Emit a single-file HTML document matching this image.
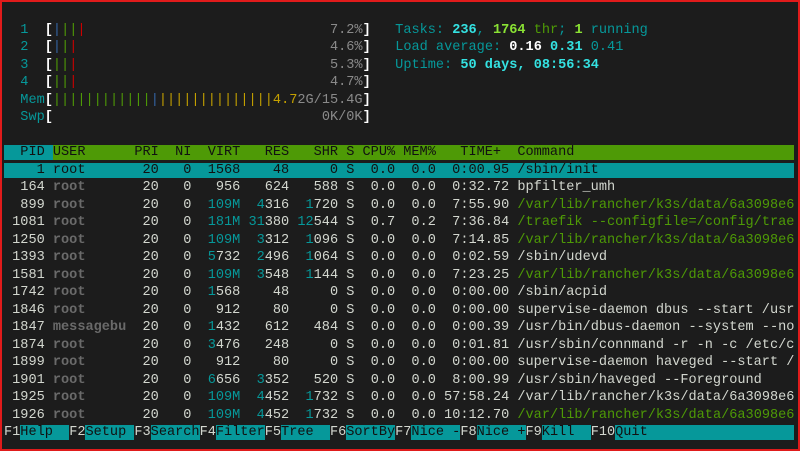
<!DOCTYPE html>
<html><head><meta charset="utf-8"><style>
html,body{margin:0;padding:0;background:#1c1c1c;}
body{width:800px;height:451px;overflow:hidden;position:relative;}
.frame{position:absolute;left:0;top:0;width:796px;height:447px;border:2px solid #e01b1b;}
pre{position:absolute;left:4px;top:4px;margin:0;font-family:"Liberation Mono",monospace;font-size:13.58px;line-height:17.5px;color:#d3d7cf;white-space:pre;}
.c{color:#06989a}.C{color:#34e2e2;font-weight:bold}.g{color:#4e9a06}.G{color:#8ae234;font-weight:bold}
.b{color:#3465a4}.r{color:#cc0000}.y{color:#c4a000}.k{color:#8a8a8a}.W{color:#fff;font-weight:bold}
.u{color:#6a6a6a;font-weight:bold}
.hp{background:#06989a;color:#111}.hg{background:#4e9a06;color:#111}
.sel{background:#06989a;color:#111}
.f{background:#06989a;color:#111}
</style></head><body><div class="frame"></div>
<pre>

  <span class="c">1</span>  <span class="W">[</span><span class="b">|</span><span class="g">||</span><span class="r">|</span>                              <span class="k">7.2%</span><span class="W">]</span>   <span class="c">Tasks: </span><span class="C">236</span><span class="c">, </span><span class="G">1764</span><span class="g"> thr</span><span class="c">; </span><span class="G">1</span><span class="c"> running</span>
  <span class="c">2</span>  <span class="W">[</span><span class="b">|</span><span class="g">|</span><span class="r">|</span>                               <span class="k">4.6%</span><span class="W">]</span>   <span class="c">Load average: </span><span class="W">0.16 </span><span class="C">0.31 </span><span class="c">0.41</span>
  <span class="c">3</span>  <span class="W">[</span><span class="g">||</span><span class="r">|</span>                               <span class="k">5.3%</span><span class="W">]</span>   <span class="c">Uptime: </span><span class="C">50 days, 08:56:34</span>
  <span class="c">4</span>  <span class="W">[</span><span class="g">||</span><span class="r">|</span>                               <span class="k">4.7%</span><span class="W">]</span>
  <span class="c">Mem</span><span class="W">[</span><span class="g">||||||||||||</span><span class="b">|</span><span class="y">||||||||||||||4.7</span><span class="k">2G/15.4G</span><span class="W">]</span>
  <span class="c">Swp</span><span class="W">[</span>                                 <span class="k">0K/0K</span><span class="W">]</span>

<span class="hp">  PID </span><span class="hg">USER      PRI  NI  VIRT   RES   SHR S CPU% MEM%   TIME+  Command                           </span>
<span class="sel">    1 root       20   0  1568    48     0 S  0.0  0.0  0:00.95 /sbin/init                        </span>
  164 <span class="u">root     </span>  20   0   956   624   588 S  0.0  0.0  0:32.72 bpfilter_umh
  899 <span class="u">root     </span>  20   0  <span class="c">109M</span>  <span class="c">4</span>316  <span class="c">1</span>720 S  0.0  0.0  7:55.90 <span class="g">/var/lib/rancher/k3s/data/6a3098e6</span>
 1081 <span class="u">root     </span>  20   0  <span class="c">181M</span> <span class="c">31</span>380 <span class="c">12</span>544 S  0.7  0.2  7:36.84 <span class="g">/traefik --configfile=/config/trae</span>
 1250 <span class="u">root     </span>  20   0  <span class="c">109M</span>  <span class="c">3</span>312  <span class="c">1</span>096 S  0.0  0.0  7:14.85 <span class="g">/var/lib/rancher/k3s/data/6a3098e6</span>
 1393 <span class="u">root     </span>  20   0  <span class="c">5</span>732  <span class="c">2</span>496  <span class="c">1</span>064 S  0.0  0.0  0:02.59 /sbin/udevd
 1581 <span class="u">root     </span>  20   0  <span class="c">109M</span>  <span class="c">3</span>548  <span class="c">1</span>144 S  0.0  0.0  7:23.25 <span class="g">/var/lib/rancher/k3s/data/6a3098e6</span>
 1742 <span class="u">root     </span>  20   0  <span class="c">1</span>568    48     0 S  0.0  0.0  0:00.00 /sbin/acpid
 1846 <span class="u">root     </span>  20   0   912    80     0 S  0.0  0.0  0:00.00 supervise-daemon dbus --start /usr
 1847 <span class="u">messagebu</span>  20   0  <span class="c">1</span>432   612   484 S  0.0  0.0  0:00.39 /usr/bin/dbus-daemon --system --no
 1874 <span class="u">root     </span>  20   0  <span class="c">3</span>476   248     0 S  0.0  0.0  0:01.81 /usr/sbin/connmand -r -n -c /etc/c
 1899 <span class="u">root     </span>  20   0   912    80     0 S  0.0  0.0  0:00.00 supervise-daemon haveged --start /
 1901 <span class="u">root     </span>  20   0  <span class="c">6</span>656  <span class="c">3</span>352   520 S  0.0  0.0  8:00.99 /usr/sbin/haveged --Foreground
 1925 <span class="u">root     </span>  20   0  <span class="c">109M</span>  <span class="c">4</span>452  <span class="c">1</span>732 S  0.0  0.0 57:58.24 /var/lib/rancher/k3s/data/6a3098e6
 1926 <span class="u">root     </span>  20   0  <span class="c">109M</span>  <span class="c">4</span>452  <span class="c">1</span>732 S  0.0  0.0 10:12.70 <span class="g">/var/lib/rancher/k3s/data/6a3098e6</span>
F1<span class="f">Help  </span>F2<span class="f">Setup </span>F3<span class="f">Search</span>F4<span class="f">Filter</span>F5<span class="f">Tree  </span>F6<span class="f">SortBy</span>F7<span class="f">Nice -</span>F8<span class="f">Nice +</span>F9<span class="f">Kill  </span>F10<span class="f">Quit                  </span></pre>
</body></html>
